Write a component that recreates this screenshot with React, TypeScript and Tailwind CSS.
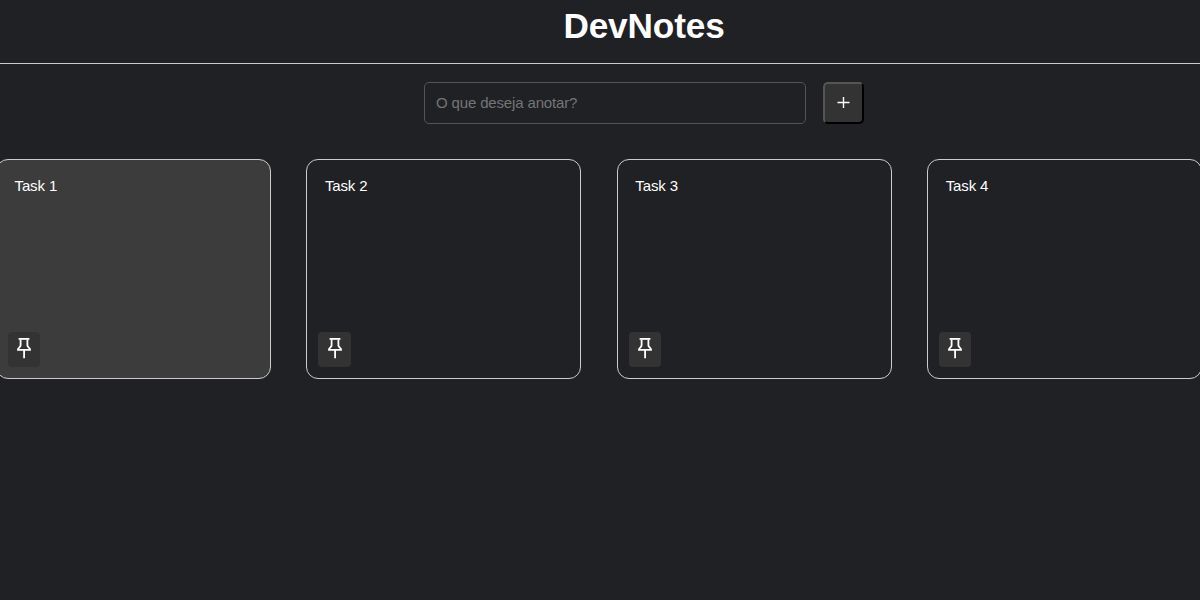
const tasks = ["Task 1", "Task 2", "Task 3", "Task 4"];

function PinIcon() {
  return (
    <svg width="16" height="24" viewBox="0 0 16 24" fill="none" stroke="#fff">
      <path d="M2.6 2.9H13.4" strokeWidth="1.8" />
      <path d="M4.6 3.5V9.4C4.5 11 2.7 11.4 2 13.2V13.9H14V13.2C13.3 11.4 11.5 11 11.4 9.4V3.5" strokeWidth="1.8" />
      <path d="M8.1 14V22.2" strokeWidth="1.8" />
    </svg>
  );
}

function Note({ title, pinned }: { title: string; pinned: boolean }) {
  return (
    <article
      className={`flex h-[220px] w-[275px] shrink-0 flex-col items-start justify-between rounded-[12px] border border-[#ccc] pt-[17px] pb-[11px] pl-[11px] ${pinned ? "bg-[#3c3c3d]" : ""}`}
    >
      <p className="ml-[6.5px] text-[15px] leading-[18px] tracking-[-0.12px] text-white">{title}</p>
      <button className="flex h-[35px] w-[32.3px] items-start justify-center rounded-[4px] bg-[#333] pt-1">
        <PinIcon />
      </button>
    </article>
  );
}

export default function App() {
  return (
    <div className="h-[600px] w-[1200px] overflow-hidden bg-[#202124] font-['Liberation_Sans',Arial,sans-serif]">
      <header className="flex h-16 justify-center border-b border-[#ccc] pt-[5px] pl-[88px]">
        <h1 className="text-[35.2px] leading-[41px] font-bold tracking-[-0.15px] text-white">DevNotes</h1>
      </header>
      <form className="mt-[18px] flex gap-[17px] pl-[424px]" onSubmit={(e) => e.preventDefault()}>
        <input
          className="h-[42px] w-[382px] rounded-[5px] border border-[#555] bg-transparent px-[11px] pb-[2px] text-[15px] tracking-[-0.15px] text-white outline-none placeholder:text-[#757575]"
          placeholder="O que deseja anotar?"
        />
        <button className="flex h-[42px] w-[41px] items-center justify-center rounded-[5px] border-2 border-t-[#555] border-r-black border-b-black border-l-[#555] bg-[#333] pb-[2px]">
          <svg width="13" height="13" viewBox="0 0 13 13" stroke="#fff" strokeWidth="1.4">
            <path d="M.5 6.5H12.5M6.5 1V12" />
          </svg>
        </button>
      </form>
      <main className="mt-[35px] -ml-1 flex gap-[35.4px]">
        {tasks.map((title, i) => (
          <Note key={title} title={title} pinned={i === 0} />
        ))}
      </main>
    </div>
  );
}
